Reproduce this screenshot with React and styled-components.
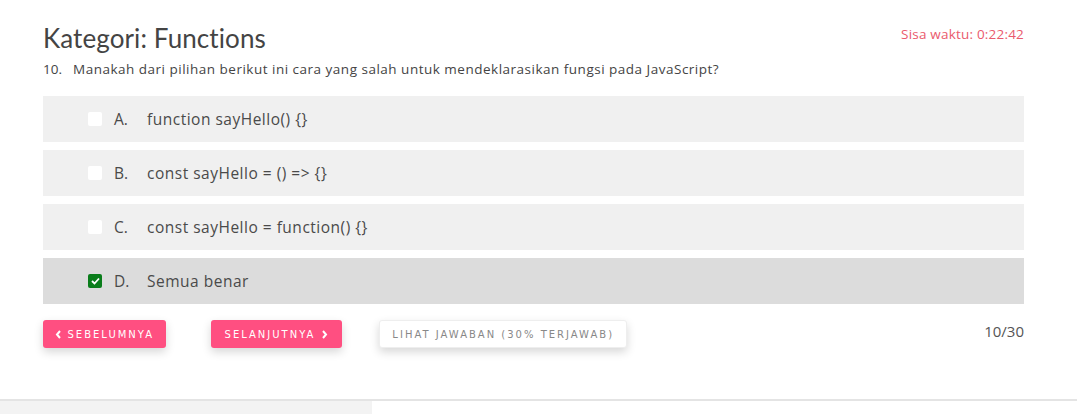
import React from "react";
import styled, { createGlobalStyle } from "styled-components";

const Global = createGlobalStyle`
  html, body { margin: 0; padding: 0; background: #fff; }
  body { font-family: "Open Sans", Lato, sans-serif; color: #4a4a4a; }
`;

const Main = styled.main`
  padding: 22px 53px 0 43px;
  height: 377px;
  box-sizing: border-box;
`;

const Header = styled.div`
  display: flex;
  justify-content: space-between;
  align-items: flex-start;
`;

const Title = styled.h1`
  margin: 0;
  font-family: Lato, sans-serif;
  font-size: 26px;
  font-weight: 400;
  line-height: 32px;
  letter-spacing: 0.1px;
  color: #444;
`;

const Timer = styled.div`
  font-size: 13.5px;
  letter-spacing: 0.2px;
  color: #ea5a6d;
  margin-top: 3px;
`;

const Question = styled.p`
  margin: 6px 0 0;
  font-size: 13.5px;
  letter-spacing: 0.5px;
  line-height: 18px;
  display: flex;
  color: #444;
`;

const QNum = styled.span`
  width: 30px;
  letter-spacing: 0;
`;

const Options = styled.div`
  display: flex;
  flex-direction: column;
  gap: 8px;
  margin-top: 18px;
`;

const Option = styled.label`
  display: flex;
  align-items: center;
  height: 46px;
  padding-left: 45px;
  background: ${(p) => (p.$selected ? "#dcdcdc" : "#f0f0f0")};
  font-size: 15.5px;
  letter-spacing: 0.5px;
  color: #4a4a4a;
`;

const Box = styled.span`
  width: 14px;
  height: 14px;
  border-radius: 2px;
  background: ${(p) => (p.$checked ? "#0a7d1b" : "#fff")};
  display: flex;
  align-items: center;
  justify-content: center;
  margin-right: 12px;
`;

const Letter = styled.span`
  width: 33px;
  letter-spacing: 0;
`;

const Footer = styled.div`
  display: flex;
  align-items: center;
  margin-top: 16px;
`;

const Btn = styled.button`
  height: 28px;
  padding: 0 ${(p) => p.$px || 12}px;
  border-radius: 3px;
  background: ${(p) => (p.$light ? "#fff" : "#ff4f81")};
  color: ${(p) => (p.$light ? "#888" : "#fff")};
  font-family: "DejaVu Sans", sans-serif;
  font-size: 10px;
  letter-spacing: 2px;
  display: flex;
  align-items: center;
  gap: 6px;
  box-shadow: 0 4px 10px rgba(0, 0, 0, 0.16);
  border: ${(p) => (p.$light ? "1px solid #eee" : "none")};
  margin-right: ${(p) => p.$mr || 0}px;
  cursor: pointer;
`;

const Count = styled.div`
  margin-left: auto;
  font-size: 15px;
  color: #555;
  align-self: flex-start;
  margin-top: 1px;
`;

const BottomBar = styled.div`
  border-top: 2px solid #e4e4e4;
  margin-top: 22px;
  display: flex;
`;

const SidePanel = styled.div`
  width: 372px;
  height: 20px;
  background: #f3f3f3;
`;

const Chev = ({ dir }) => (
  <svg width="7" height="9" viewBox="0 0 7 9">
    <path
      d={dir === "left" ? "M5 1 L2 4.5 L5 8" : "M2 1 L5 4.5 L2 8"}
      stroke="#fff"
      strokeWidth="2"
      fill="none"
    />
  </svg>
);

const options = [
  ["A.", "function sayHello() {}"],
  ["B.", "const sayHello = () => {}"],
  ["C.", "const sayHello = function() {}"],
  ["D.", "Semua benar"],
];

export default function App() {
  return (
    <>
      <Global />
      <Main>
        <Header>
          <Title>Kategori: Functions</Title>
          <Timer>Sisa waktu: 0:22:42</Timer>
        </Header>
        <Question>
          <QNum>10.</QNum>
          Manakah dari pilihan berikut ini cara yang salah untuk mendeklarasikan fungsi pada JavaScript?
        </Question>
        <Options>
          {options.map(([l, t], i) => {
            const sel = i === 3;
            return (
              <Option key={l} $selected={sel}>
                <Box $checked={sel}>
                  {sel && (
                    <svg width="9" height="8" viewBox="0 0 9 8">
                      <path d="M1 4 L3.5 6.5 L8 1.5" stroke="#fff" strokeWidth="1.8" fill="none" />
                    </svg>
                  )}
                </Box>
                <Letter>{l}</Letter>
                {t}
              </Option>
            );
          })}
        </Options>
        <Footer>
          <Btn $mr={45} $px={11.5}>
            <Chev dir="left" />
            SEBELUMNYA
          </Btn>
          <Btn $mr={37} $px={14}>
            SELANJUTNYA
            <Chev dir="right" />
          </Btn>
          <Btn $light $px={12}>LIHAT JAWABAN (30% TERJAWAB)</Btn>
          <Count>10/30</Count>
        </Footer>
      </Main>
      <BottomBar>
        <SidePanel />
      </BottomBar>
    </>
  );
}
